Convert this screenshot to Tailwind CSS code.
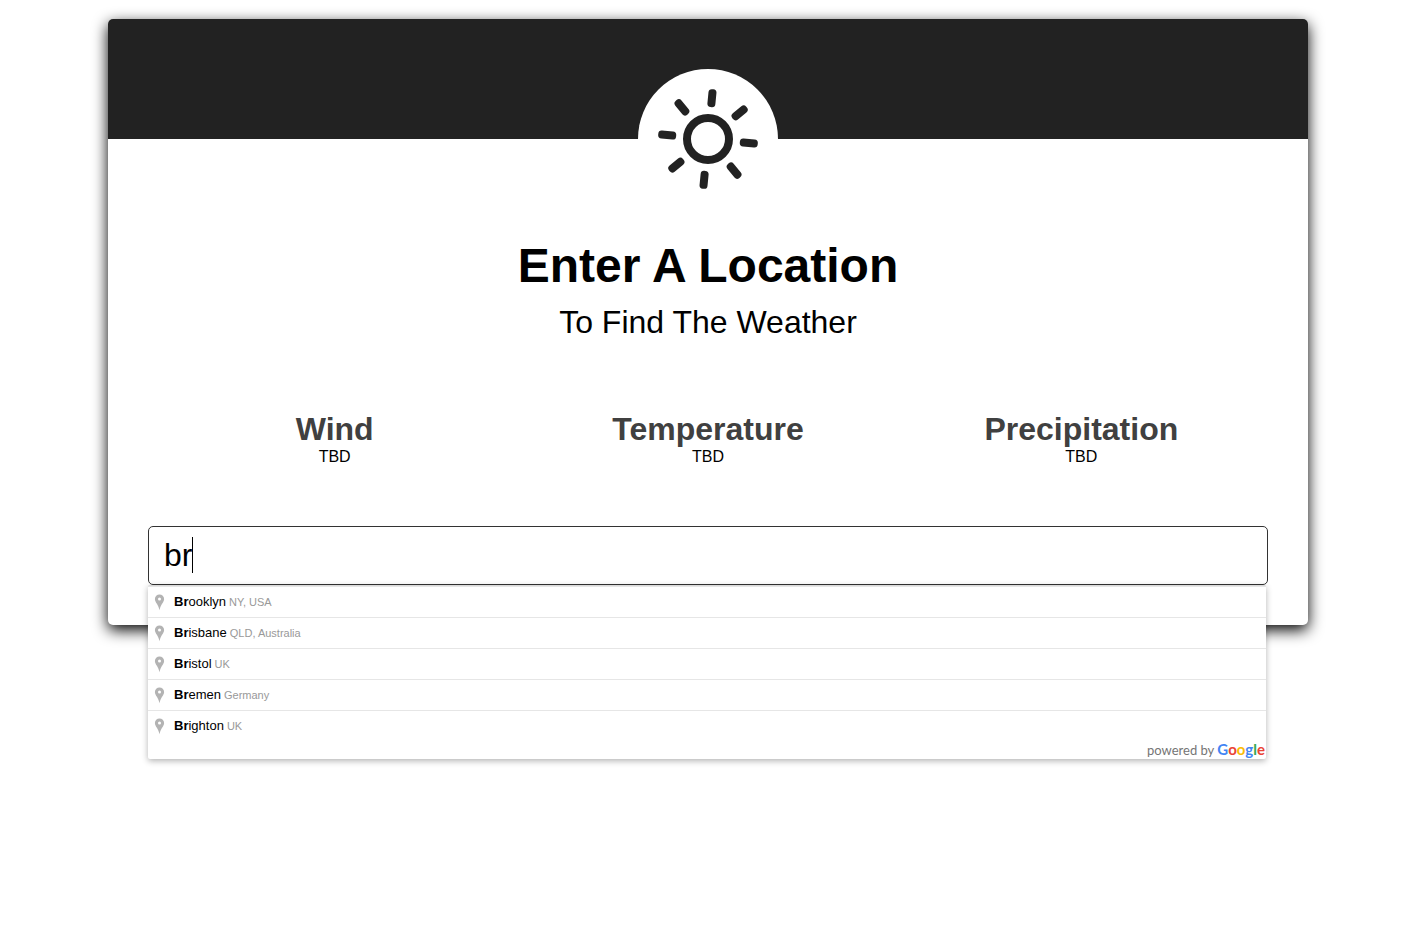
<!DOCTYPE html>
<html lang="en">
<head>
<meta charset="utf-8">
<meta name="viewport" content="width=device-width, initial-scale=1">
<title>Weather</title>
<script src="https://cdn.jsdelivr.net/npm/@tailwindcss/browser@4"></script>
</head>
<body class="min-h-screen bg-white font-['Liberation_Sans',Arial,sans-serif] text-black">
<svg class="hidden" aria-hidden="true">
  <symbol id="pin" viewBox="0 0 15 20"><path fill="#b3b3b3" fill-rule="evenodd" d="M7.500 2.500a4.600 4.600 0 0 0-4.600 4.600c0 3.500 3.300 5 4.600 11.200 1.300-6.200 4.600-7.700 4.600-11.200a4.600 4.600 0 0 0-4.600-4.600zm0 2.900a1.500 1.500 0 1 1 0 3 1.500 1.500 0 0 1 0-3z"/></symbol>
</svg>
<main class="min-h-screen pt-[19px] pl-[11px]">
  <section class="mx-auto w-full max-w-[1200px] rounded-[5px] bg-white shadow-[0_5px_15px_#000]">
    <header class="flex h-[120px] items-start justify-center rounded-t-[5px] bg-[#222] pt-[50px]">
      <div class="flex size-[140px] shrink-0 items-center justify-center rounded-full bg-white">
        <svg class="size-[100px]" viewBox="-50 -50 100 100" fill="none" stroke="#222" stroke-width="8" aria-hidden="true">
          <circle r="21"/>
          <g fill="#222" stroke="none" transform="rotate(5.5)">
            <g id="rays"><rect x="-4" y="-50" width="8" height="18" rx="3.500"/><rect x="-4" y="32" width="8" height="18" rx="3.500"/><rect x="-50" y="-4" width="18" height="8" rx="3.500"/><rect x="32" y="-4" width="18" height="8" rx="3.500"/></g>
            <use href="#rays" transform="rotate(45)"/>
          </g>
        </svg>
      </div>
    </header>
    <div class="px-10 pt-[99px] pb-10">
      <h1 class="text-center text-[48px] leading-[56px] font-bold">Enter A Location</h1>
      <p class="mt-[10px] text-center text-[32px] leading-[36px]">To Find The Weather</p>
      <div class="mt-[71px] grid grid-cols-3 text-center">
        <div><h2 class="text-[32px] leading-[37px] font-bold text-[#404040]">Wind</h2><p class="text-base leading-[18px]">TBD</p></div>
        <div><h2 class="text-[32px] leading-[37px] font-bold text-[#404040]">Temperature</h2><p class="text-base leading-[18px]">TBD</p></div>
        <div><h2 class="text-[32px] leading-[37px] font-bold text-[#404040]">Precipitation</h2><p class="text-base leading-[18px]">TBD</p></div>
      </div>
      <div class="relative mt-[60px]">
        <input type="text" value="br" aria-label="Location" class="block h-[59px] w-full rounded-[5px] border border-[#333] bg-white px-[15px] text-[32px] text-black caret-transparent outline-none">
        <span class="absolute top-[11px] left-[44px] h-9 w-px bg-black"></span>
        <div class="absolute top-full right-[2px] left-0 rounded-[2px] border-t border-[#d9d9d9] bg-white text-[11px] text-[#999] shadow-[0_2px_6px_rgba(0,0,0,0.3)]">
          <ul>
            <li class="flex h-[31px] items-center border-t border-[#e6e6e6] px-1"><svg class="mr-[7px] h-5 w-[15px]" aria-hidden="true"><use href="#pin"/></svg><span class="mr-[3px] text-[13px] text-black"><b>Br</b>ooklyn</span><span>NY, USA</span></li>
            <li class="flex h-[31px] items-center border-t border-[#e6e6e6] px-1"><svg class="mr-[7px] h-5 w-[15px]" aria-hidden="true"><use href="#pin"/></svg><span class="mr-[3px] text-[13px] text-black"><b>Br</b>isbane</span><span>QLD, Australia</span></li>
            <li class="flex h-[31px] items-center border-t border-[#e6e6e6] px-1"><svg class="mr-[7px] h-5 w-[15px]" aria-hidden="true"><use href="#pin"/></svg><span class="mr-[3px] text-[13px] text-black"><b>Br</b>istol</span><span>UK</span></li>
            <li class="flex h-[31px] items-center border-t border-[#e6e6e6] px-1"><svg class="mr-[7px] h-5 w-[15px]" aria-hidden="true"><use href="#pin"/></svg><span class="mr-[3px] text-[13px] text-black"><b>Br</b>emen</span><span>Germany</span></li>
            <li class="flex h-[31px] items-center border-t border-[#e6e6e6] px-1"><svg class="mr-[7px] h-5 w-[15px]" aria-hidden="true"><use href="#pin"/></svg><span class="mr-[3px] text-[13px] text-black"><b>Br</b>ighton</span><span>UK</span></li>
          </ul>
          <div class="flex h-[18px] items-baseline justify-end gap-[3px] pr-px font-['Lato',sans-serif] text-[13px] leading-[16px] text-[#757575]">
            <span>powered by</span>
            <span class="text-[15px] leading-[16px] font-bold"><span class="text-[#4285f4]">G</span><span class="text-[#ea4335]">o</span><span class="text-[#fbbc05]">o</span><span class="text-[#4285f4]">g</span><span class="text-[#34a853]">l</span><span class="text-[#ea4335]">e</span></span>
          </div>
        </div>
      </div>
    </div>
  </section>
</main>
</body>
</html>
